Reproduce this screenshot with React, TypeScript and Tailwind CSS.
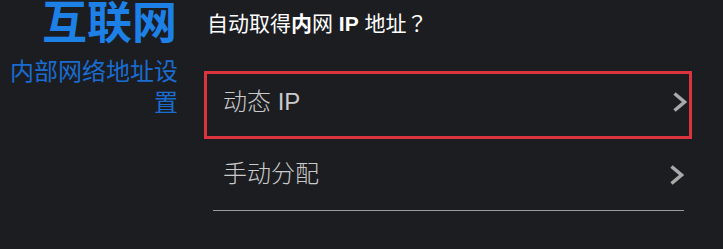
import { ReactNode } from 'react'

const font = { fontFamily: '"Liberation Sans", "Noto Sans CJK SC", sans-serif' }

function Chevron() {
  return (
    <svg width="15" height="22" viewBox="0 0 15 22" className="shrink-0">
      <polyline
        points="2.5,2.5 12.5,11 2.5,19.5"
        fill="none"
        stroke="#a9a9a9"
        strokeWidth="3.5"
        strokeLinejoin="miter"
      />
    </svg>
  )
}

function Row({ label, selected }: { label: ReactNode; selected?: boolean }) {
  if (selected) {
    return (
      <div className="-ml-[1px] h-[68px] border-[3px] border-[#dc343e] flex items-center justify-between pl-[16px] pr-[2px]">
        <span className="text-[24px] leading-none font-light text-[#cacaca] -mt-[6px]">{label}</span>
        <div className="-mt-[6px]">
          <Chevron />
        </div>
      </div>
    )
  }
  return (
    <div className="mx-[8px] h-[72px] border-b border-[#9a9a9a] flex items-center justify-between pl-[10px]">
      <span className="text-[24px] leading-none font-light text-[#cacaca] -mt-[2px]">{label}</span>
      <Chevron />
    </div>
  )
}

export default function App() {
  return (
    <div className="w-[723px] h-[249px] bg-[#1c1d21] flex overflow-hidden" style={font}>
      {/* left caption */}
      <div className="w-[177px] shrink-0 text-right">
        <div className="text-[45px] leading-[48px] font-bold text-[#1d80e6] whitespace-nowrap">
          互联网
        </div>
        <div className="text-[24px] leading-[31px] text-[#1a6cd0] mt-[8px] -mr-[1px]">
          内部网络地址设
          <br />置
        </div>
      </div>

      {/* option list */}
      <div className="ml-[28px] w-[487px] shrink-0 flex flex-col">
        <div className="pl-[2px] pt-[8px] text-[21px] leading-[28px] text-white">
          自动取得<b>内</b>网 <b>IP</b> 地址<span className="font-['Noto_Sans_CJK_JP']">？</span>
        </div>
        <div className="mt-[33px]">
          <Row label="动态 IP" selected />
          <Row label="手动分配" />
        </div>
        <div className="mt-[38px] mx-auto w-[172px] h-[30px] bg-[#c4c4c4] rounded-t-[2px] shrink-0 translate-x-[1px]" />
      </div>
    </div>
  )
}
